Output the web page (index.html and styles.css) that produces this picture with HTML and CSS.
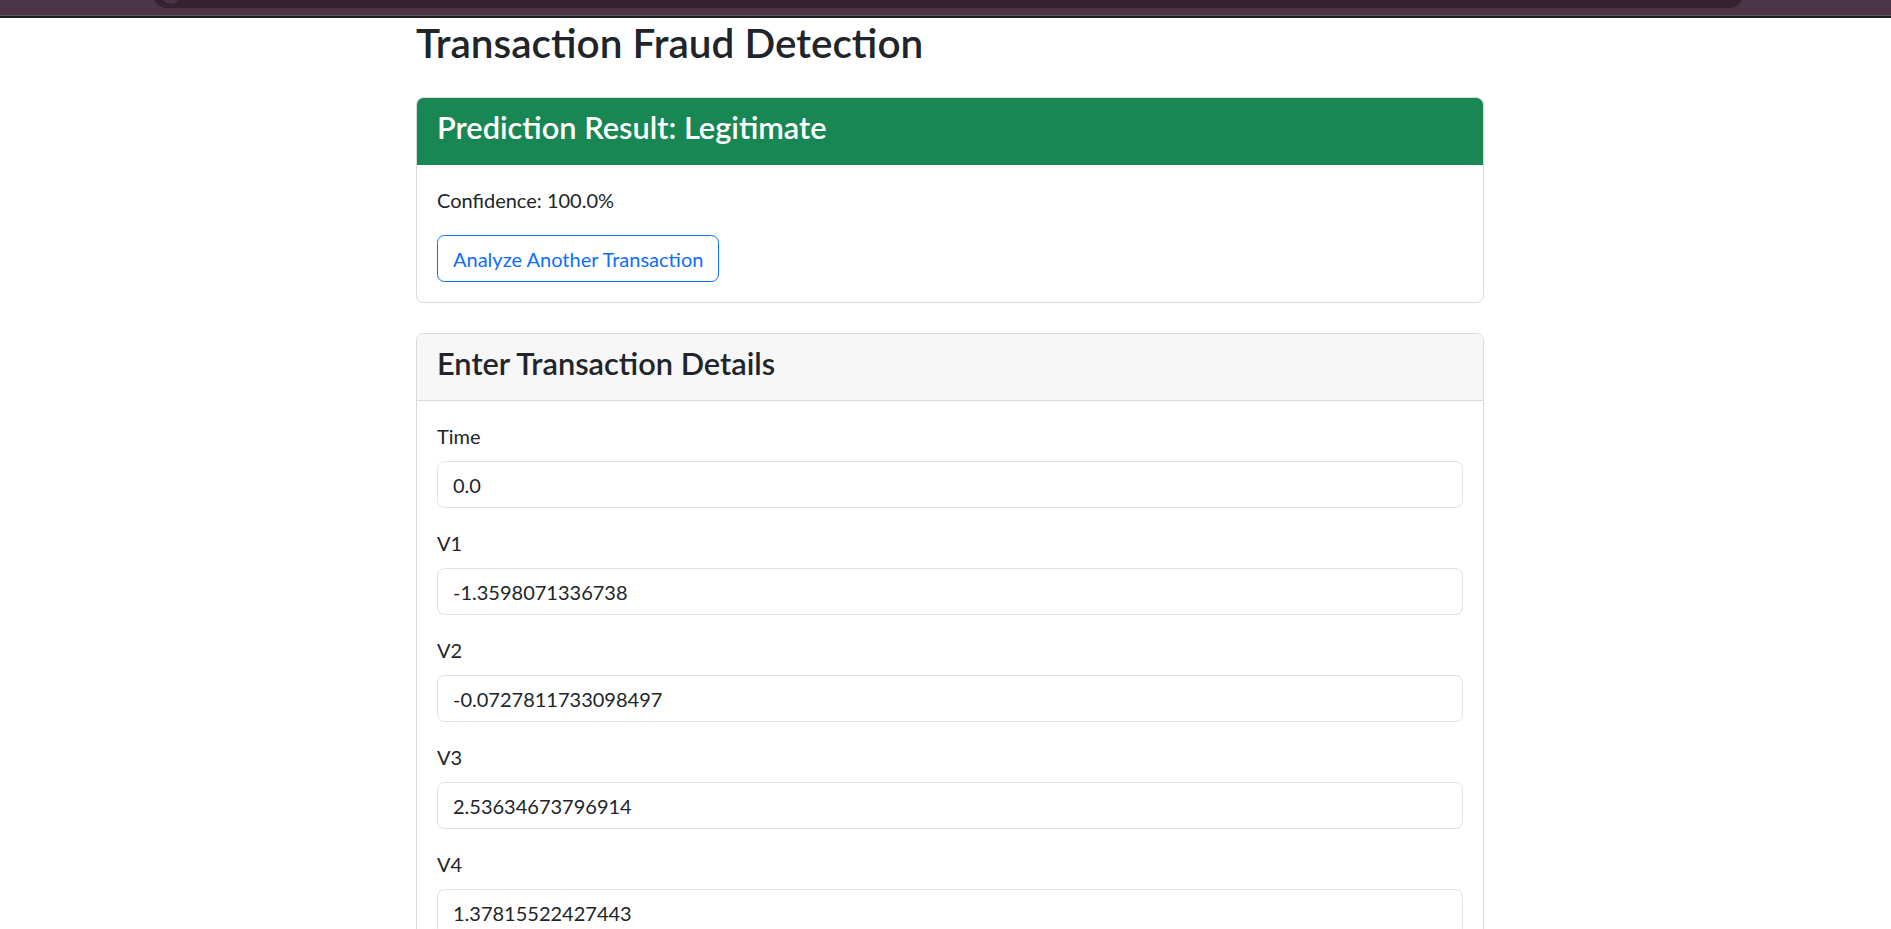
FILE: index.html
```html
<!DOCTYPE html>
<html lang="en">
<head>
<meta charset="utf-8">
<title>Transaction Fraud Detection</title>
<link rel="stylesheet" href="styles.css">
</head>
<body>
<div class="topbar"><div class="urlbar"><span class="urlicon"></span></div></div>
<div class="topbar-edge"></div>

<main class="page">
  <h1 class="title">Transaction Fraud Detection</h1>

  <section class="card">
    <div class="card-header card-header-success">
      <h4 class="card-title">Prediction Result: Legitimate</h4>
    </div>
    <div class="card-body">
      <p class="confidence">Confidence: 100.0%</p>
      <a class="btn-outline" href="#">Analyze Another Transaction</a>
    </div>
  </section>

  <section class="card card-form">
    <div class="card-header">
      <h4 class="card-title">Enter Transaction Details</h4>
    </div>
    <div class="card-body">
      <form class="tx-form">
        <div class="field"><label class="field-label" for="f-time">Time</label><input class="field-input" id="f-time" type="text" value="0.0"></div>
        <div class="field"><label class="field-label" for="f-v1">V1</label><input class="field-input" id="f-v1" type="text" value="-1.3598071336738"></div>
        <div class="field"><label class="field-label" for="f-v2">V2</label><input class="field-input" id="f-v2" type="text" value="-0.0727811733098497"></div>
        <div class="field"><label class="field-label" for="f-v3">V3</label><input class="field-input" id="f-v3" type="text" value="2.53634673796914"></div>
        <div class="field"><label class="field-label" for="f-v4">V4</label><input class="field-input" id="f-v4" type="text" value="1.37815522427443"></div>
        <div class="field"><label class="field-label" for="f-v5">V5</label><input class="field-input" id="f-v5" type="text" value="-0.338320769942518"></div>
        <div class="field"><label class="field-label" for="f-v6">V6</label><input class="field-input" id="f-v6" type="text" value="0.462387777762292"></div>
      </form>
    </div>
  </section>
</main>
</body>
</html>
```

FILE: styles.css
```css
* { box-sizing: border-box; }

body {
  margin: 0;
  background: #fff;
  color: #212529;
  font-family: "Lato", "Open Sans", sans-serif;
  font-size: 20px;
  line-height: 30px;
}

.topbar {
  position: relative;
  height: 16px;
  background: #4b3546;
  border-bottom: 1px solid #5d5a5c;
  overflow: hidden;
}
.urlbar {
  position: absolute;
  left: 153px;
  width: 1590px;
  top: -20px;
  height: 28px;
  background: #35212f;
  border-radius: 0 0 14px 14px;
}
.urlicon {
  position: absolute;
  left: 8px;
  top: 4px;
  width: 20px;
  height: 20px;
  border-radius: 50%;
  background: #4a3546;
}
.topbar-edge {
  height: 2px;
  background: #1f1f1f;
}

.page {
  max-width: 1077px;
  margin: 0 auto;
  padding-left: 9px;
}

.title {
  margin: 1px 0 30px;
  font-size: 40.5px;
  font-weight: 600;
  line-height: 48px;
}

.card {
  border: 1px solid #d9d9da;
  border-radius: 7.5px;
  overflow: hidden;
  background: #fff;
}
.card + .card { margin-top: 30px; }

.card-header {
  padding: 10px 20px;
  background: #f7f7f7;
  border-bottom: 1px solid #d9d9da;
}
.card-header-success {
  background: #198754;
  border-bottom-color: #198754;
  color: #fff;
}
.card-title {
  margin: 0 0 8px;
  padding-top: 2px;
  font-size: 30.75px;
  font-weight: 600;
  line-height: 36px;
}

.card-body { padding: 20px; }

.confidence { margin: 0 0 20px; }

.btn-outline {
  display: inline-block;
  padding: 7.5px 15px;
  border: 1px solid #0d6efd;
  border-radius: 7.5px;
  color: #0d6efd;
  text-decoration: none;
  font-size: 20px;
  line-height: 30px;
}

.tx-form { margin: 0; }
.field { margin-bottom: 20px; }
.field-label {
  display: block;
  margin-bottom: 10px;
}
.field-input {
  display: block;
  width: 100%;
  height: 47px;
  padding: 7px 15px;
  border: 1px solid #dee2e6;
  border-radius: 7.5px;
  background: #fff;
  color: #212529;
  font: inherit;
  line-height: 30px;
}
```
